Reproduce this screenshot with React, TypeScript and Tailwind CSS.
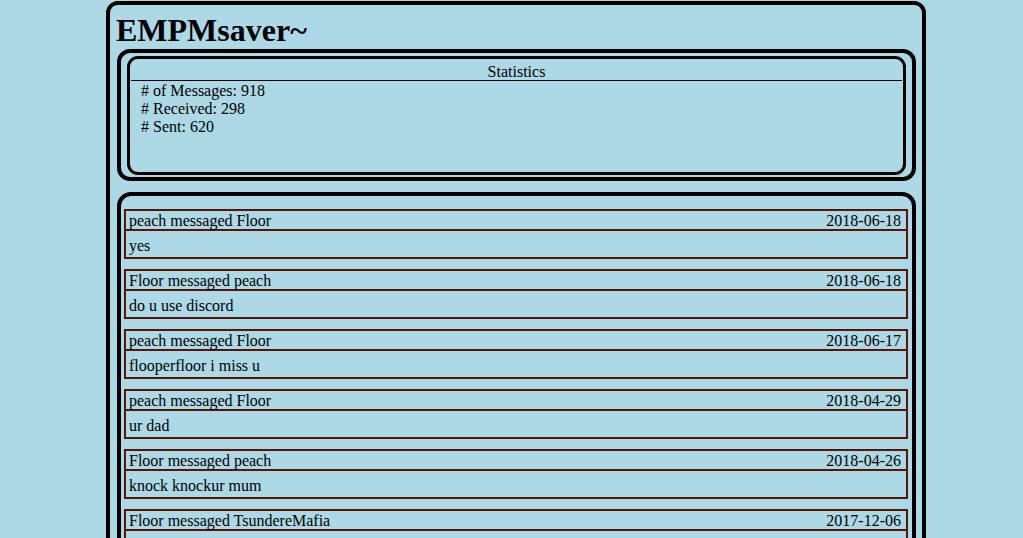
import React from "react";

const messages = [
  { from: "peach", to: "Floor", date: "2018-06-18", body: "yes" },
  { from: "Floor", to: "peach", date: "2018-06-18", body: "do u use discord" },
  { from: "peach", to: "Floor", date: "2018-06-17", body: "flooperfloor i miss u" },
  { from: "peach", to: "Floor", date: "2018-04-29", body: "ur dad" },
  { from: "Floor", to: "peach", date: "2018-04-26", body: "knock knockur mum" },
  { from: "Floor", to: "TsundereMafia", date: "2017-12-06", body: "hey" },
  { from: "TsundereMafia", to: "Floor", date: "2017-12-05", body: "hi" },
];

export default function App() {
  return (
    <div
      className="min-h-[538px] bg-[#add8e6] pt-[1px] text-black text-[16px]"
      style={{ fontFamily: '"Liberation Serif", "Times New Roman", serif' }}
    >
      <div className="ml-[106px] w-[820px] border-4 border-black rounded-[12px] pb-[10px]">
        <div className="pl-[6px] pt-[8px] pb-[1px] text-[32px] font-bold leading-[35px]">
          EMPMsaver~
        </div>
        <div className="ml-[7px] mr-[6px] border-4 border-black rounded-[13px] px-[6px] pt-[3px] pb-[2px]">
          <div className="h-[119px] border-[3px] border-black rounded-[11px] px-[1px]">
            <div className="pt-[5px] leading-[16px] text-center border-b border-black">
              Statistics
            </div>
            <div className="pt-[1px] pl-[10px] leading-[18px]">
              <div># of Messages: 918</div>
              <div># Received: 298</div>
              <div># Sent: 620</div>
            </div>
          </div>
        </div>
        <div className="mt-[11px] ml-[7px] mr-[6px] border-4 border-black rounded-[14px] pt-[13px] pl-[3px] pr-[4px] pb-[10px] flex flex-col gap-[10px]">
          {messages.map((m, i) => (
            <div key={i} className="border-2 border-[#5a1400]">
              <div className="flex justify-between pl-[3px] pr-[5px] pt-[2px] leading-[16px] border-b-2 border-[#5a1400]">
                <span>
                  {m.from} messaged {m.to}
                </span>
                <span>{m.date}</span>
              </div>
              <div className="pl-[3px] pt-[6px] pb-[2px] leading-[18px]">{m.body}</div>
            </div>
          ))}
        </div>
      </div>
    </div>
  );
}
